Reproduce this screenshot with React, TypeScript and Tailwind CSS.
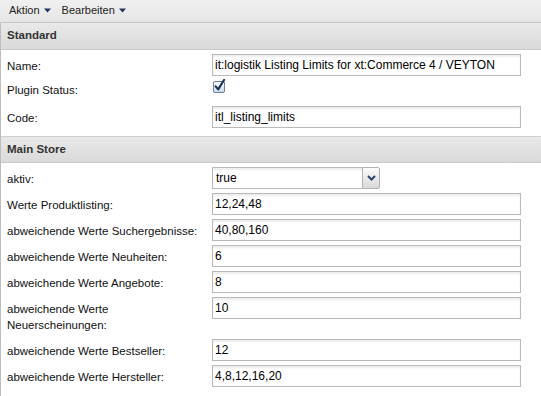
const font = { fontFamily: '"Liberation Sans", Arial, sans-serif' };

function Caret() {
  return (
    <svg width="7" height="5" viewBox="0 0 7 5" className="ml-[4px]">
      <path d="M0 0.5h7L3.5 4.5z" fill="#1f3559" />
    </svg>
  );
}

function Header({ title, top }: { title: string; top?: boolean }) {
  return (
    <div
      className={`h-[27px] flex items-center pl-[6px] bg-gradient-to-b from-[#e9e9e9] to-[#dadada] border-b border-[#c9c9c9] text-[11.5px] font-bold text-[#333] ${
        top ? '' : 'border-t border-t-[#cfcfcf]'
      }`}
    >
      {title}
    </div>
  );
}

function TextRow({ label, value, className = '' }: { label: string; value: string; className?: string }) {
  return (
    <div className={`flex items-start ${className}`}>
      <div className="w-[211px] pl-[6px] pt-[4px] text-[11.5px] leading-[16px] text-[#111]">{label}</div>
      <div className="w-[309px] h-[22px] border border-[#b9b9b9] bg-white shadow-[inset_0_2px_2px_rgba(0,0,0,0.07)] pl-[2px] flex items-center text-[12px] text-black">
        {value}
      </div>
    </div>
  );
}

function TwoLineRow({ line1, line2, value }: { line1: string; line2: string; value: string }) {
  return (
    <div className="flex items-start">
      <div className="w-[211px] pl-[6px] pt-[4px] pb-[2px] text-[11.5px] leading-[16px] text-[#111]">
        <div>{line1}</div>
        <div>{line2}</div>
      </div>
      <div className="w-[309px] h-[22px] border border-[#b9b9b9] bg-white shadow-[inset_0_2px_2px_rgba(0,0,0,0.07)] pl-[2px] flex items-center text-[12px] text-black">
        {value}
      </div>
    </div>
  );
}

export default function App() {
  return (
    <div className="w-[541px] h-[396px] bg-white overflow-hidden" style={font}>
      {/* Toolbar */}
      <div className="h-[23px] flex items-center gap-[11px] pl-[9px] pb-[1px] bg-gradient-to-b from-[#f0f0f0] to-[#e6e6e6] border-b border-[#c6c6c6] text-[11px] text-[#222]">
        <span className="flex items-center">
          Aktion
          <Caret />
        </span>
        <span className="flex items-center">
          Bearbeiten
          <Caret />
        </span>
      </div>

      <div className="border-l border-[#bdbdbd] w-[541px] h-[373px]">
        <Header title="Standard" top />
        <div className="pt-[4px] pb-[8px] flex flex-col">
          <TextRow label="Name:" value="it:logistik Listing Limits for xt:Commerce 4 / VEYTON" className="mb-[2px]" />
          <div className="flex items-start h-[24px] mb-[4px]">
            <div className="w-[211px] pl-[6px] pt-[4px] text-[11.5px] leading-[16px] text-[#111]">Plugin Status:</div>
            <svg width="14" height="14" viewBox="0 0 14 14" className="mt-[1px] ml-[1px]">
              <defs>
                <linearGradient id="cb" x1="0" y1="0" x2="0" y2="1">
                  <stop offset="0" stopColor="#ffffff" />
                  <stop offset="1" stopColor="#c9daf0" />
                </linearGradient>
              </defs>
              <rect x="0.5" y="2.5" width="11" height="11" rx="1.5" fill="url(#cb)" stroke="#6f7f96" />
              <path d="M2.6 7.4l2.6 3 5.8-9.4" fill="none" stroke="#1b2f57" strokeWidth="2.1" strokeLinecap="round" strokeLinejoin="round" />
            </svg>
          </div>
          <TextRow label="Code:" value="itl_listing_limits" />
        </div>

        <Header title="Main Store" />
        <div className="pt-[4px] flex flex-col gap-[4px]">
          <div className="flex items-start">
            <div className="w-[211px] pl-[6px] pt-[4px] text-[11.5px] leading-[16px] text-[#111]">aktiv:</div>
            <div className="w-[168px] h-[22px] flex">
              <div className="flex-1 border border-r-0 border-[#b9b9b9] bg-white shadow-[inset_0_2px_2px_rgba(0,0,0,0.07)] pl-[3px] flex items-center text-[12px] text-black">
                true
              </div>
              <div className="w-[18px] border border-[#b3b3b3] rounded-r-[2px] bg-gradient-to-b from-[#fbfbfb] to-[#d9d9d9] flex items-center justify-center">
                <svg width="9" height="6" viewBox="0 0 9 6">
                  <path d="M1 1l3.5 3.5L8 1" fill="none" stroke="#2a4470" strokeWidth="2" />
                </svg>
              </div>
            </div>
          </div>
          <TextRow label="Werte Produktlisting:" value="12,24,48" />
          <TextRow label="abweichende Werte Suchergebnisse:" value="40,80,160" />
          <TextRow label="abweichende Werte Neuheiten:" value="6" />
          <TextRow label="abweichende Werte Angebote:" value="8" />
          <TwoLineRow line1="abweichende Werte" line2="Neuerscheinungen:" value="10" />
          <TextRow label="abweichende Werte Bestseller:" value="12" />
          <TextRow label="abweichende Werte Hersteller:" value="4,8,12,16,20" />
        </div>
      </div>
    </div>
  );
}
